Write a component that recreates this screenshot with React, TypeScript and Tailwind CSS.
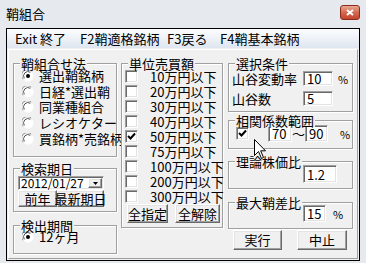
import React from "react";

const sunken =
  "bg-white border border-t-[#a0a0a0] border-l-[#a0a0a0] border-b-white border-r-white shadow-[inset_1px_1px_0_#696969,inset_-1px_-1px_0_#e3e3e3]";
const raised =
  "bg-[#f0f0f0] border border-t-white border-l-white border-b-[#696969] border-r-[#696969] shadow-[inset_-1px_-1px_0_#a0a0a0,inset_1px_1px_0_#e3e3e3]";

function Radio({ checked }: { checked?: boolean }) {
  return (
    <svg width="12" height="12" viewBox="0 0 12 12" className="shrink-0">
      <circle cx="6" cy="6" r="5.5" fill="#ffffff" />
      <path d="M1.2 9.2 A5.5 5.5 0 0 1 9.2 1.2" fill="none" stroke="#8a8a8a" strokeWidth="1" />
      <path d="M2.3 8.4 A4.4 4.4 0 0 1 8.4 2.3" fill="none" stroke="#505050" strokeWidth="1" />
      <path d="M9.8 2.8 A5.5 5.5 0 0 1 2.8 9.8" fill="none" stroke="#ffffff" strokeWidth="1" />
      {checked && <circle cx="6" cy="6" r="2" fill="#000" />}
    </svg>
  );
}

function Check({ checked }: { checked?: boolean }) {
  return (
    <div className={`w-[13px] h-[13px] shrink-0 ${sunken} flex items-center justify-center`}>
      {checked && (
        <svg width="9" height="9" viewBox="0 0 9 9">
          <path d="M1 4 L3.5 6.5 L8 1.5" fill="none" stroke="#000" strokeWidth="2" />
        </svg>
      )}
    </div>
  );
}

function Group({
  label,
  className,
  children,
}: {
  label: string;
  className: string;
  children?: React.ReactNode;
}) {
  return (
    <div
      className={`relative border border-[#a0a0a0] shadow-[1px_1px_0_#ffffff,inset_1px_1px_0_#ffffff] ${className}`}
    >
      <div className="absolute left-[6px] top-[-7px] bg-[#f0f0f0] px-[1px] text-[13px] leading-[13px] text-black">
        {label}
      </div>
      {children}
    </div>
  );
}

function Field({ value, className }: { value: string; className: string }) {
  return (
    <div className={`${sunken} ${className} shrink-0 pl-[3px] text-[13px] leading-[13px] flex items-center`}>
      {value}
    </div>
  );
}

export default function App() {
  const amounts = [
    "10万円以下",
    "20万円以下",
    "30万円以下",
    "40万円以下",
    "50万円以下",
    "75万円以下",
    "100万円以下",
    "200万円以下",
    "300万円以下",
  ];
  const methods = ["選出鞘銘柄", "日経*選出鞘", "同業種組合", "レシオケター", "買銘柄*売銘柄"];
  return (
    <div className="w-[366px] h-[263px] bg-[#e6eaef] relative overflow-hidden whitespace-nowrap font-['Noto_Sans_CJK_JP','Noto_Sans',sans-serif] text-black">
      {/* title bar */}
      <div className="h-[28px] flex items-start justify-between pl-[6px] pr-[6px]">
        <div className="text-[13px] leading-[14px] mt-[7px]">鞘組合</div>
        <div className="mt-[5px] w-[20px] h-[15px] rounded-[3px] border border-[#8a2c1c] bg-gradient-to-b from-[#e9a893] via-[#d4684f] to-[#c4432c] flex items-center justify-center">
          <svg width="8" height="7" viewBox="0 0 8 7">
            <path d="M1 1 L7 6 M7 1 L1 6" stroke="#fff" strokeWidth="2" />
          </svg>
        </div>
      </div>
      {/* client */}
      <div className="mx-[6px] h-[233px] border border-black flex flex-col">
        {/* menu bar */}
        <div className="h-[19px] bg-gradient-to-b from-[#fcfdfe] to-[#dfe6f0] flex items-center text-[13px] leading-[14px] pl-[8px]">
          <span className="w-[65px]">Exit 終了</span>
          <span className="w-[87px]">F2鞘適格銘柄</span>
          <span className="w-[53px]">F3戻る</span>
          <span>F4鞘基本銘柄</span>
        </div>
        {/* body */}
        <div className="flex-1 bg-[#f0f0f0] p-[1px] flex">
          <div className="flex-1 flex pl-[4px] border border-t-white border-l-white border-r-[#a0a0a0] border-b-[#a0a0a0]">
            {/* column 1 */}
            <div className="w-[104px] shrink-0 flex flex-col">
              <Group label="鞘組合せ法" className="mt-[13px] h-[94px] pt-[4px] pl-[8px]">
                {methods.map((m, i) => (
                  <div key={m} className="h-[15.75px] flex items-center gap-[5px] text-[13px] leading-[14px]">
                    <Radio checked={i === 0} />
                    <span>{m}</span>
                  </div>
                ))}
              </Group>
              <Group label="検索期日" className="mt-[11px] h-[44px] pt-[7px] pl-[4px]">
                <div className={`${sunken} w-[86px] h-[14px] flex items-center justify-between text-[12px] leading-[12px] pl-[2px] pr-[1px]`}>
                  <span>2012/01/27</span>
                  <div className={`${raised} w-[14px] h-[10px] shrink-0 flex items-center justify-center`}>
                    <svg width="5" height="3" viewBox="0 0 5 3">
                      <path d="M0 0 L5 0 L2.5 3 Z" fill="#000" />
                    </svg>
                  </div>
                </div>
                <div className="flex">
                  <div className={`${raised} w-[39px] h-[17px] flex items-center justify-center text-[13px] leading-[14px]`}>前年</div>
                  <div className={`${raised} w-[47px] h-[17px] flex items-center justify-center text-[13px] leading-[14px]`}>最新期日</div>
                </div>
              </Group>
              <Group label="検出期間" className="mt-[13px] h-[29px] pt-[3px] pl-[8px]">
                <div className="h-[16px] flex items-center gap-[5px] text-[13px] leading-[14px]">
                  <Radio checked />
                  <span>12ヶ月</span>
                </div>
              </Group>
            </div>
            {/* column 2 */}
            <div className="w-[102px] shrink-0 ml-[4px] flex flex-col">
              <Group label="単位売買額" className="mt-[13px] h-[165px] pt-[5px] pl-[3px]">
                {amounts.map((a, i) => (
                  <div key={a} className="h-[15px] flex items-center text-[13px] leading-[14px]">
                    <Check checked={i === 4} />
                    <span className="ml-[12px]">{a}</span>
                  </div>
                ))}
                <div className="flex gap-[7px] pl-[2px]">
                  <div className={`${raised} w-[41px] h-[19px] flex items-center justify-center text-[13px] leading-[14px]`}>全指定</div>
                  <div className={`${raised} w-[45px] h-[19px] flex items-center justify-center text-[13px] leading-[14px]`}>全解除</div>
                </div>
              </Group>
            </div>
            {/* column 3 */}
            <div className="w-[125px] shrink-0 ml-[5px] flex flex-col">
              <Group label="選択条件" className="mt-[13px] h-[49px] pt-[7px] pl-[3px] text-[13px] leading-[14px]">
                <div className="flex items-center h-[15px]">
                  <span className="w-[71px]">山谷変動率</span>
                  <Field value="10" className="w-[30px] h-[15px]" />
                  <span className="ml-[5px] text-[11px]">%</span>
                </div>
                <div className="flex items-center h-[15px] mt-[5px]">
                  <span className="w-[71px]">山谷数</span>
                  <Field value="5" className="w-[30px] h-[15px]" />
                </div>
              </Group>
              <Group label="相関係数範囲" className="mt-[8px] h-[29px] pt-[4px] pl-[7px] text-[13px] leading-[14px]">
                <div className="flex items-center h-[17px]">
                  <Check checked />
                  <Field value="70" className="ml-[19px] w-[24px] h-[17px]" />
                  <span className="w-[13px] text-center text-[13px]">～</span>
                  <Field value="90" className="w-[23px] h-[17px]" />
                  <span className="ml-[12px] text-[11px]">%</span>
                </div>
              </Group>
              <Group label="理論株価比" className="mt-[12px] h-[28px] pt-[3px] pl-[74px] text-[13px] leading-[14px]">
                <Field value="1.2" className="w-[34px] h-[18px]" />
              </Group>
              <Group label="最大鞘差比" className="mt-[13px] h-[27px] pt-[2px] pl-[74px] text-[13px] leading-[14px]">
                <div className="flex items-center">
                  <Field value="15" className="w-[23px] h-[17px]" />
                  <span className="ml-[7px] text-[11px]">%</span>
                </div>
              </Group>
              <div className="flex mt-[1px] pl-[5px] gap-[15px]">
                <div className={`${raised} w-[49px] h-[20px] flex items-center justify-center text-[13px] leading-[14px]`}>実行</div>
                <div className={`${raised} w-[50px] h-[20px] flex items-center justify-center text-[13px] leading-[14px]`}>中止</div>
              </div>
            </div>
          </div>
        </div>
      </div>
      {/* mouse cursor */}
      <svg
        className="absolute left-[254px] top-[139px]"
        width="13"
        height="21"
        viewBox="0 0 13 21"
      >
        <path
          d="M0.5 0.5 L0.5 16.5 L4.5 12.5 L7.5 19.5 L9.5 18.5 L6.7 11.8 L11.5 11.8 Z"
          fill="#fff"
          stroke="#000"
          strokeWidth="1"
        />
      </svg>
    </div>
  );
}
